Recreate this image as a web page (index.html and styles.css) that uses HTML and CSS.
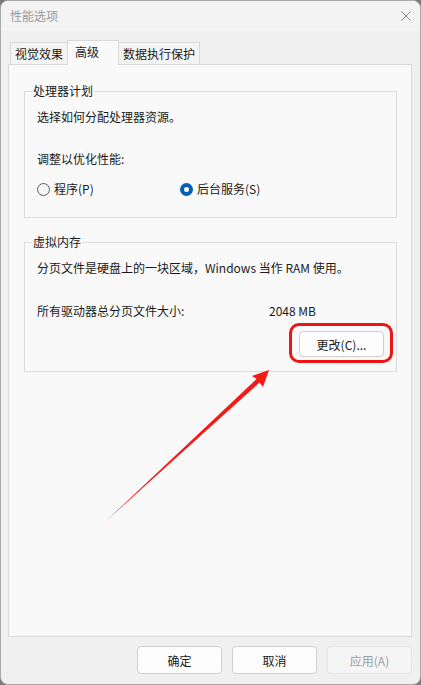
FILE: index.html
```html
<!DOCTYPE html>
<html lang="zh-CN">
<head>
    <meta charset="UTF-8">
    <meta name="viewport" content="width=device-width, initial-scale=1.0">
    <title>性能选项</title>
    <link rel="stylesheet" href="styles.css">
</head>
<body>
    <div class="window">
        <div class="titlebar">
            <span class="title">性能选项</span>
            <svg class="close" width="10" height="10" viewBox="0 0 10 10">
                <path d="M0.5 0.5 L9.5 9.5 M9.5 0.5 L0.5 9.5" stroke="#8a8a8a" stroke-width="1" fill="none"/>
            </svg>
        </div>

        <div class="body">
            <div class="tabs">
                <div class="tab">视觉效果</div>
                <div class="tab active">高级</div>
                <div class="tab">数据执行保护</div>
            </div>

            <div class="panel">
                <fieldset class="group">
                    <legend>处理器计划</legend>
                    <p>选择如何分配处理器资源。</p>
                    <p class="gap-big">调整以优化性能:</p>
                    <div class="radios">
                        <label class="radio"><span class="dot"></span>程序(P)</label>
                        <label class="radio checked"><span class="dot"></span>后台服务(S)</label>
                    </div>
                </fieldset>

                <fieldset class="group second">
                    <legend>虚拟内存</legend>
                    <p>分页文件是硬盘上的一块区域，Windows 当作 RAM 使用。</p>
                    <div class="size-row">
                        <span>所有驱动器总分页文件大小:</span>
                        <span>2048 MB</span>
                    </div>
                    <div class="btn-row">
                        <span class="highlight">
                            <button class="btn">更改(C)...</button>
                        </span>
                    </div>
                </fieldset>
            </div>

            <div class="footer">
                <button class="btn big">确定</button>
                <button class="btn big">取消</button>
                <button class="btn big" disabled>应用(A)</button>
            </div>
        </div>

        <!-- стрелка-подсказка поверх окна -->
        <svg class="arrow" width="421" height="685" viewBox="0 0 421 685">
            <polygon points="105,522 256.5,379 252,376 269,370 263,387 259.5,382.5" fill="#f51a1a"/>
        </svg>
    </div>
</body>
</html>
```

FILE: styles.css
```css
* {
    margin: 0;
    padding: 0;
    box-sizing: border-box;
}

html, body {
    width: 100%;
    height: 100%;
    background: #7a7a7a;
    overflow: hidden;
}

body {
    font-family: "Noto Sans CJK SC", "Noto Sans", sans-serif;
    font-size: 12px;
    line-height: 16px;
    color: #1a1a1a;
}

.window {
    position: relative;
    width: 421px;
    height: 685px;
    background: #f0f0f0;
    border: 1px solid #a9a9a9;
    border-radius: 8px;
    overflow: hidden;
    display: flex;
    flex-direction: column;
}

.titlebar {
    height: 30px;
    flex: none;
    background: #f3f3f3;
    display: flex;
    align-items: center;
    justify-content: space-between;
    padding: 0 9px 0 9px;
}

.title {
    color: #9a9a9a;
}

.close {
    display: block;
    margin-right: 0;
}

.body {
    flex: 1;
    display: flex;
    flex-direction: column;
    padding: 9px 8px 10px 7px;
    min-height: 0;
}

.tabs {
    display: flex;
    align-items: flex-end;
    height: 25px;
    margin-left: 2px;
    margin-bottom: -1px;
    position: relative;
    z-index: 1;
}

.tab {
    height: 22px;
    margin-bottom: 1px;
    padding: 0 4px;
    line-height: 21px;
    background: #f4f4f4;
    border: 1px solid #d9d9d9;
    border-bottom: none;
}

.tab + .tab {
    margin-left: -1px;
}

.tab.active {
    height: 25px;
    margin-bottom: 0;
    width: 52px;
    padding: 0 0 0 7px;
    line-height: 21px;
    background: #f9f9f9;
}

.panel {
    flex: 1;
    background: #f9f9f9;
    border: 1px solid #d9d9d9;
    padding: 18px 14px 0 15px;
}

.group {
    border: 1px solid #dcdcdc;
    padding: 10px 12px 20px 12px;
    min-width: 0;
}

.group legend {
    padding: 0 1px;
    margin-left: -5px;
    line-height: 16px;
}

.group.second {
    margin-top: 16px;
    padding-bottom: 14px;
}

.gap-big {
    margin-top: 26px;
}

.radios {
    display: grid;
    grid-template-columns: 143px auto;
    margin-top: 14px;
}

.radio {
    display: flex;
    align-items: center;
    gap: 4px;
}

.dot {
    width: 13px;
    height: 13px;
    border-radius: 50%;
    border: 1px solid #5e5e5e;
    background: #f6f6f6;
    display: flex;
    align-items: center;
    justify-content: center;
}

.radio.checked .dot {
    border: none;
    background: #005fb8;
}

.radio.checked .dot::after {
    content: "";
    width: 5px;
    height: 5px;
    border-radius: 50%;
    background: #fff;
}

.size-row {
    display: grid;
    grid-template-columns: 232px auto;
    margin-top: 27px;
}

.btn-row {
    display: flex;
    justify-content: flex-end;
    margin-top: 12px;
}

.highlight {
    position: relative;
    display: block;
}

.highlight::after {
    content: "";
    position: absolute;
    top: -8px;
    right: -9px;
    bottom: -6px;
    left: -10px;
    border: 3px solid #ee1414;
    border-radius: 10px;
    pointer-events: none;
}

.btn {
    display: block;
    width: 85px;
    height: 26px;
    font-family: inherit;
    font-size: 12px;
    color: #1a1a1a;
    background: #fdfdfd;
    border: 1px solid #d0d0d0;
    border-radius: 4px;
}

.footer {
    display: flex;
    justify-content: flex-end;
    gap: 10px;
    margin-top: 9px;
}

.btn.big {
    height: 28px;
}

.btn:disabled {
    background: #f5f5f5;
    border-color: #e6e6e6;
    color: #9d9d9d;
}

.arrow {
    position: absolute;
    top: -1px;
    left: -1px;
    pointer-events: none;
}
```
